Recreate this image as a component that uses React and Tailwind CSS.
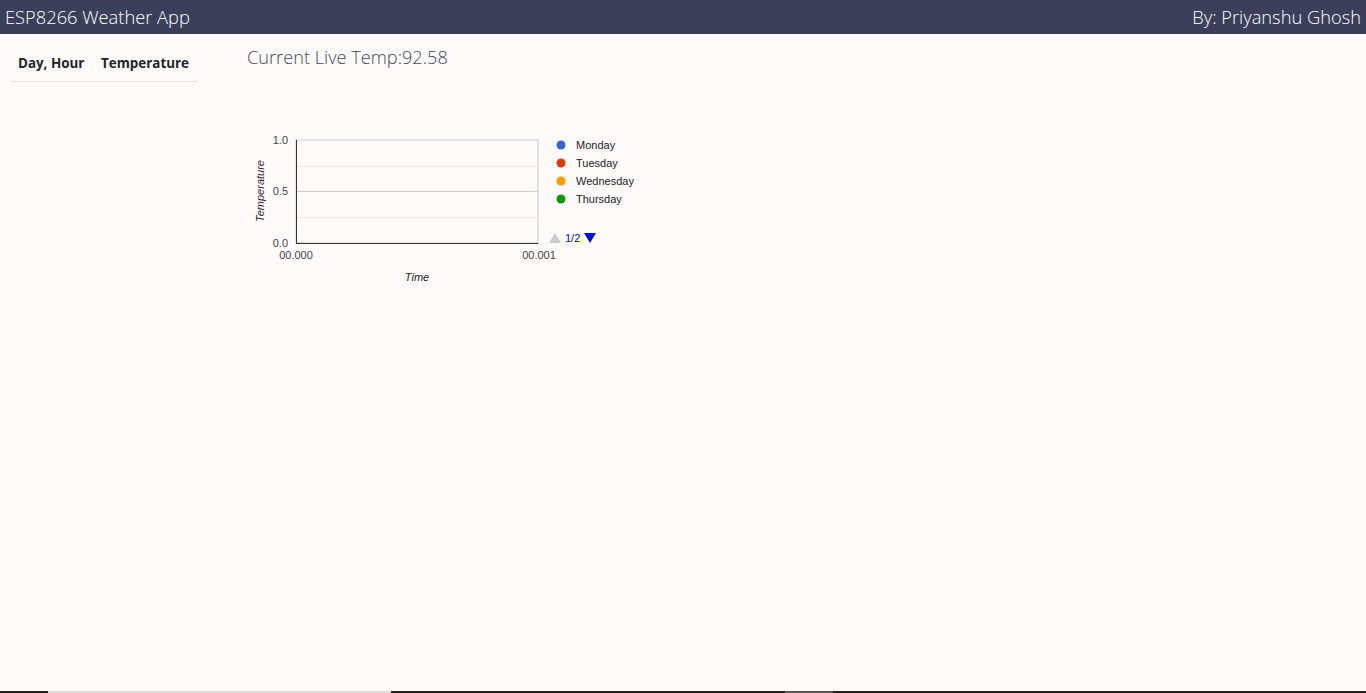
const LEGEND = [
  { label: 'Monday', color: '#3366cc' },
  { label: 'Tuesday', color: '#dc3912' },
  { label: 'Wednesday', color: '#ff9900' },
  { label: 'Thursday', color: '#109618' },
]

function TempChart() {
  // plot area box inside the svg
  const left = 49
  const right = 291
  const top = 20
  const bottom = 123
  return (
    <svg width="420" height="180" className="block" style={{ fontFamily: '"Liberation Sans", Arial, sans-serif' }}>
      <rect x={left} y={top} width={right - left} height={bottom - top} fill="#fffafa" stroke="#cccccc" />
      <line x1={left} x2={right} y1="46.5" y2="46.5" stroke="#ebebeb" />
      <line x1={left} x2={right} y1="71.5" y2="71.5" stroke="#cccccc" />
      <line x1={left} x2={right} y1="97.5" y2="97.5" stroke="#ebebeb" />
      <line x1={left + 0.5} x2={left + 0.5} y1={top} y2={bottom} stroke="#333333" />
      <line x1={left} x2={right} y1={bottom + 0.5} y2={bottom + 0.5} stroke="#333333" />

      <g fontSize="11" fill="#444444" textAnchor="end">
        <text x="41" y="24">1.0</text>
        <text x="41" y="75">0.5</text>
        <text x="41" y="127">0.0</text>
      </g>
      <g fontSize="11" fill="#444444" textAnchor="middle">
        <text x="49" y="139">00.000</text>
        <text x="292" y="139">00.001</text>
      </g>
      <text x="170" y="161" fontSize="11" fontStyle="italic" fill="#222222" textAnchor="middle">
        Time
      </text>
      <text
        x="0"
        y="0"
        fontSize="11"
        fontStyle="italic"
        fill="#3a1a2a"
        textAnchor="middle"
        transform="translate(17 71) rotate(-90)"
      >
        Temperature
      </text>

      {LEGEND.map((item, i) => (
        <g key={item.label}>
          <circle cx="314" cy={25 + i * 18} r="4.5" fill={item.color} />
          <text x="329" y={29 + i * 18} fontSize="11" fill="#222222">
            {item.label}
          </text>
        </g>
      ))}

      <polygon points="302,123 314,123 308,113" fill="#cccccc" />
      <text x="318" y="122" fontSize="11" fill="#0011cc">
        1/2
      </text>
      <polygon points="337,113 349,113 343,123" fill="#0011cc" />
    </svg>
  )
}

export default function App() {
  return (
    <div className="flex h-screen flex-col bg-[#fffafa]" style={{ fontFamily: '"Open Sans", "Noto Sans", sans-serif' }}>
      <header className="flex h-[34px] items-center justify-between bg-[#3b3f59] px-[5px] text-[18.3px] font-light text-white">
        <span>ESP8266 Weather App</span>
        <span>By: Priyanshu Ghosh</span>
      </header>

      <main className="flex flex-1">
        <div className="ml-[10px] mt-[14px] w-[187px]">
          <table className="text-[13.4px] font-bold leading-[18px] text-[#212529]">
            <thead>
              <tr className="border-b border-[#dee2e6]">
                <th className="w-[84px] whitespace-nowrap pb-[9px] pl-[8px] pr-0 pt-[6px] text-left">Day, Hour</th>
                <th className="px-[8px] pb-[9px] pt-[6px] text-left">Temperature</th>
              </tr>
            </thead>
          </table>
        </div>

        <div className="ml-[50px] flex flex-col">
          <h2 className="mt-[10px] text-[18.2px] font-light text-[#444a55]">Current Live Temp:92.58</h2>
          <div className="mt-[49px]">
            <TempChart />
          </div>
        </div>
      </main>

      <div className="flex h-[2px]">
        <div className="w-[48px] bg-[#222222]" />
        <div className="w-[343px] bg-[#dddddd]" />
        <div className="w-[394px] bg-[#222222]" />
        <div className="w-[48px] bg-[#555555]" />
        <div className="flex-1 bg-[#222222]" />
      </div>
    </div>
  )
}
